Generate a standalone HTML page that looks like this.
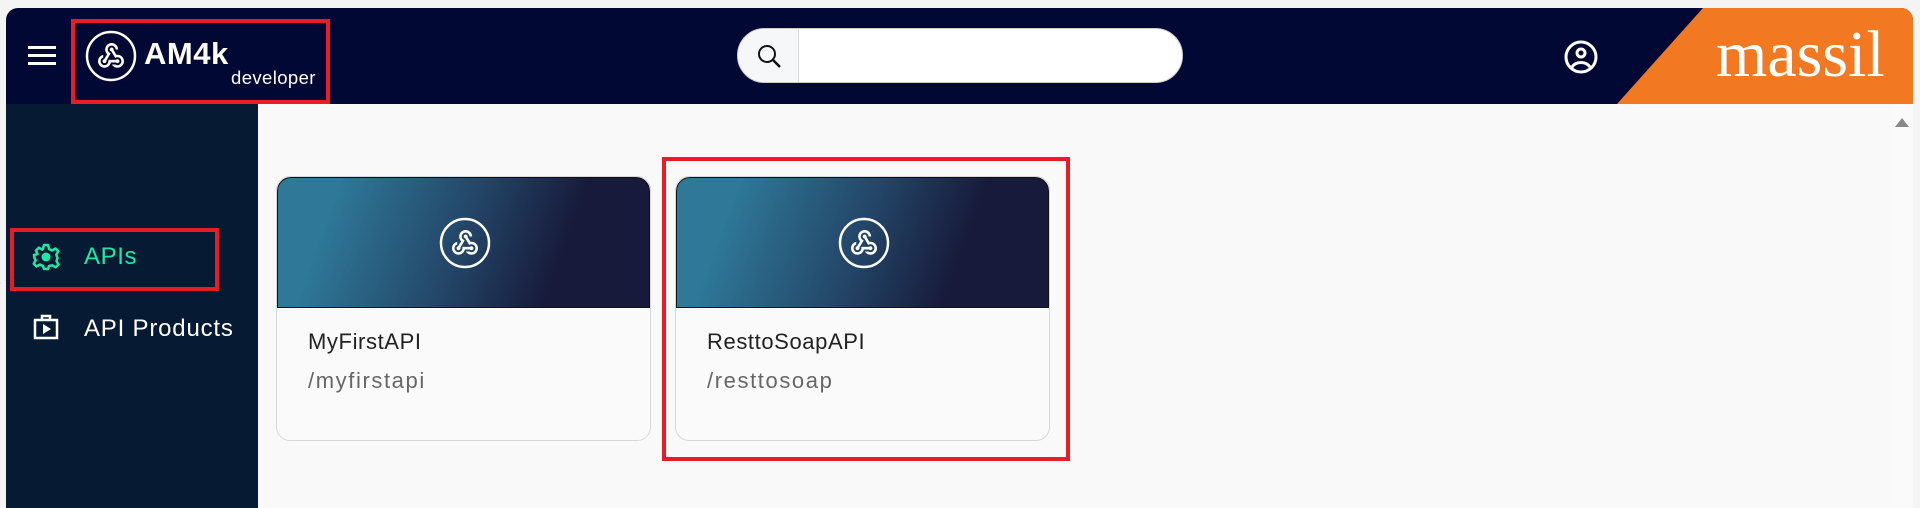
<!DOCTYPE html>
<html><head><meta charset="utf-8"><style>
*{margin:0;padding:0;box-sizing:border-box}
body{width:1920px;height:508px;overflow:hidden;background:#f4f4f4;font-family:"Liberation Sans",sans-serif;position:relative}
.hdr{position:absolute;left:6px;top:8px;width:1907px;height:96px;background:#000833;border-radius:12px 12px 0 0;overflow:hidden}
.orange{position:absolute;left:1611px;top:0;width:300px;height:96px;background:#f27822;clip-path:polygon(86px 0,300px 0,300px 96px,0 96px)}
.massil{position:absolute;left:1710px;top:14px;font-family:"Liberation Serif",serif;font-size:66px;color:#fff;line-height:66px}
.side{position:absolute;left:6px;top:104px;width:252px;height:404px;background:#071a33}
.main{position:absolute;left:258px;top:104px;width:1655px;height:404px;background:#f9f9f9}
.card{position:absolute;top:176px;width:375px;height:265px;border:1px solid #d8d8d8;border-radius:14px;background:#fafafa;overflow:hidden}
.ch{height:131px;background:linear-gradient(110deg,#2f7898 15%,#234466 50%,#171a3a 75%);border:1px solid #111;border-radius:14px 14px 0 0;position:relative}
.ch svg{position:absolute;left:161px;top:39px}
.t{position:absolute;left:31px;top:152px;font-size:22px;color:#222;letter-spacing:.6px}
.p{position:absolute;left:31px;top:191px;font-size:22px;color:#666;letter-spacing:1.6px}
.red{position:absolute;border:4px solid #e81c24}
</style></head><body>
<svg width="0" height="0" style="position:absolute"><defs><g id="wh"><circle cx="26" cy="26" r="24" fill="none" stroke="#fff" stroke-width="2.5"/><g transform="translate(10.4,10.4) scale(1.3)"><path fill="#fff" d="M10 15h5.88c.27-.31.67-.5 1.12-.5.83 0 1.5.67 1.5 1.5s-.67 1.5-1.5 1.5c-.44 0-.84-.19-1.120-.5H11.9c-.46 2.280-2.48 4-4.9 4-2.76 0-5-2.240-5-5 0-2.42 1.72-4.44 4-4.900v2.07c-1.16.41-2 1.53-2 2.830 0 1.65 1.35 3 3 3s3-1.35 3-3v-1zm2.5-11c1.65 0 3 1.35 3 3h2c0-2.76-2.24-5-5-5s-5 2.24-5 5c0 1.43.6 2.71 1.55 3.62l-2.35 3.9C6.02 14.66 5.5 15.27 5.5 16c0 .83.67 1.5 1.5 1.5s1.5-.67 1.5-1.5c0-.16-.02-.31-.07-.45l3.38-5.63C10.49 9.61 9.5 8.42 9.5 7c0-1.65 1.35-3 3-3zm4.5 9c-.64 0-1.230.2-1.72.54l-3.05-5.07C11.53 8.35 11 7.74 11 7c0-.83.67-1.5 1.5-1.5S14 6.17 14 7c0 .15-.02.29-.06.43l2.19 3.65c.28-.05.57-.08.87-.08 2.76 0 5 2.24 5 5s-2.24 5-5 5c-1.85 0-3.47-1.01-4.33-2.5h2.67c.48.32 1.050.5 1.66.5 1.65 0 3-1.35 3-3s-1.35-3-3-3z"/></g></g></defs></svg>
<div class="hdr">
<div style="position:absolute;left:22px;top:38px;width:28px;height:3px;background:#fff;box-shadow:0 8px 0 #fff,0 16px 0 #fff"></div>
<svg style="position:absolute;left:79px;top:22px" width="52" height="52" viewBox="0 0 52 52"><use href="#wh"/></svg>
<div style="position:absolute;left:138px;top:28px;font-size:31px;font-weight:bold;color:#fff;letter-spacing:.5px">AM4k</div>
<div style="position:absolute;left:225px;top:59px;font-size:18.5px;color:#fff;letter-spacing:.4px">developer</div>
<div style="position:absolute;left:731px;top:20px;width:446px;height:55px;background:#fff;border-radius:28px;overflow:hidden;border:1px solid #ccc"><div style="width:61px;height:55px;background:#f6f7f9;border-right:1px solid #ddd"></div>
<svg style="position:absolute;left:19px;top:15px" width="26" height="26" viewBox="0 0 26 26"><circle cx="10" cy="10" r="8" fill="none" stroke="#111" stroke-width="2"/><path d="M16 16l7 7" stroke="#111" stroke-width="2.5"/></svg></div>
<svg style="position:absolute;left:1558px;top:32px" width="34" height="34" viewBox="0 0 34 34"><circle cx="17" cy="17" r="15" fill="none" stroke="#fff" stroke-width="3"/><circle cx="17" cy="13" r="4" fill="none" stroke="#fff" stroke-width="3"/><path d="M8 27c4-6 14-6 18 0" fill="none" stroke="#fff" stroke-width="3"/></svg>
<div class="orange"></div><div class="massil">massil</div>
</div>
<div class="side">
<svg style="position:absolute;left:26px;top:139px" width="28" height="28" viewBox="0 0 28 28"><circle cx="14" cy="14" r="4.5" fill="#1de9a6"/><path d="M12 2h4l1 4 3 1.5 3.5-2 2.8 2.8-2 3.5L25.5 15l-1 3 2 3.5-2.8 2.8-3.5-2L17 23l-1 3h-4l-1-3-3-1.5-3.5 2-2.8-2.8 2-3.5L2.5 15 2 12h0l3.5-1L4 7.5l2.8-2.8 3.5 2L11 6z" fill="none" stroke="#1de9a6" stroke-width="2.5" stroke-linejoin="round"/></svg>
<div style="position:absolute;left:78px;top:139px;font-size:24px;color:#1de9a6;letter-spacing:.6px">APIs</div>
<svg style="position:absolute;left:26px;top:209px" width="28" height="28" viewBox="0 0 28 28"><rect x="3" y="7" width="22" height="18" fill="none" stroke="#fff" stroke-width="2.5"/><path d="M10 7V3h8v4" fill="none" stroke="#fff" stroke-width="2.5"/><path d="M11 11v10l8-5z" fill="#fff"/></svg>
<div style="position:absolute;left:78px;top:211px;font-size:24px;color:#fff;letter-spacing:.8px">API Products</div>
</div>
<div class="main"><div style="position:absolute;right:0;top:0;width:22px;height:404px;background:#fafafa"></div><div style="position:absolute;right:4px;top:14px;border:7px solid transparent;border-bottom:9px solid #888;border-top:0"></div></div>
<div class="card" style="left:276px"><div class="ch"><svg width="52" height="52" viewBox="0 0 52 52"><use href="#wh"/></svg></div><div class="t">MyFirstAPI</div><div class="p">/myfirstapi</div></div>
<div class="card" style="left:675px"><div class="ch"><svg width="52" height="52" viewBox="0 0 52 52"><use href="#wh"/></svg></div><div class="t">ResttoSoapAPI</div><div class="p">/resttosoap</div></div>
<div class="red" style="left:71px;top:19px;width:259px;height:85px"></div>
<div class="red" style="left:10px;top:228px;width:209px;height:63px"></div>
<div class="red" style="left:662px;top:157px;width:408px;height:304px"></div>
</body></html>
